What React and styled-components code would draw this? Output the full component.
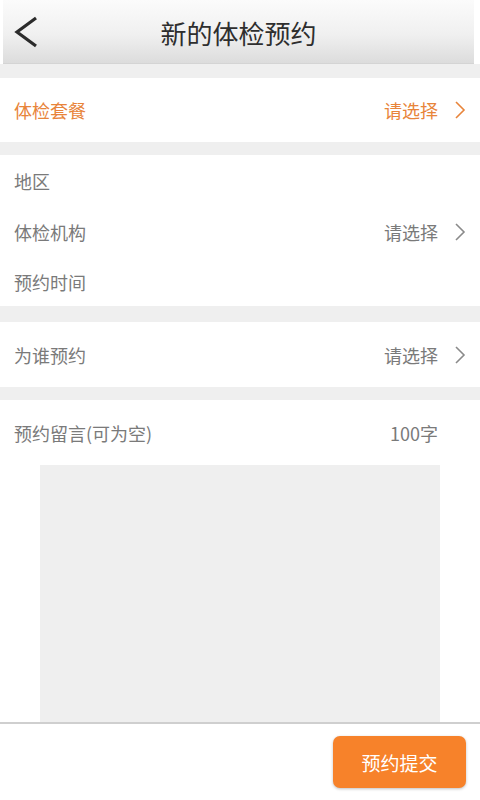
import React from "react";
import styled, { createGlobalStyle } from "styled-components";

const Global = createGlobalStyle`
  html, body { margin: 0; padding: 0; background: #ffffff; }
  body { font-family: "Noto Sans CJK SC", "Noto Sans", sans-serif; }
  * { box-sizing: border-box; }
`;

const Page = styled.div`
  width: 480px;
  height: 800px;
  display: flex;
  flex-direction: column;
  background: #ffffff;
  overflow: hidden;
`;

const HeaderWrap = styled.div`
  height: 64px;
  padding: 0 6px 0 3px;
  background: #ffffff;
  flex-shrink: 0;
`;

const Header = styled.div`
  height: 64px;
  display: grid;
  grid-template-columns: 60px 1fr 60px;
  align-items: center;
  background: linear-gradient(#fbfbfb 0%, #f0f0f0 55%, #dcdcdc 100%);
  border-bottom: 1px solid #d4d4d4;
`;

const BackBtn = styled.div`
  display: flex;
  align-items: center;
  padding-left: 10px;
  height: 100%;
`;

const Title = styled.div`
  text-align: center;
  font-size: 26px;
  color: #2e2e2e;
  padding-top: 1px;
`;

const Content = styled.div`
  flex: 1;
  background: #efefef;
  display: flex;
  flex-direction: column;
  padding-top: 14px;
  overflow: hidden;
`;

const Section = styled.div`
  background: #ffffff;
  display: flex;
  flex-direction: column;
  margin-top: ${(p) => p.mt || 0}px;
  flex: ${(p) => (p.grow ? 1 : "none")};
`;

const Row = styled.div`
  height: ${(p) => p.h || 51}px;
  display: flex;
  align-items: center;
  justify-content: space-between;
  padding: 0 14px;
  font-size: 18px;
  color: ${(p) => (p.accent ? "#e8843a" : "#7a7a7a")};
`;

const Right = styled.div`
  display: flex;
  align-items: center;
  gap: 16px;
`;

const Counter = styled.span`
  margin-right: 28px;
`;

const MessageBox = styled.div`
  flex: 1;
  margin: 0 40px;
  background: #efefef;
`;

const Footer = styled.div`
  height: 78px;
  flex-shrink: 0;
  border-top: 2px solid #cfcfcf;
  background: #ffffff;
  display: flex;
  align-items: flex-start;
  justify-content: flex-end;
  padding: 12px 14px 0 0;
`;

const SubmitBtn = styled.button`
  width: 133px;
  height: 52px;
  border: none;
  border-radius: 7px;
  background: #f7822a;
  color: #ffffff;
  font-family: "Noto Sans CJK SC", sans-serif;
  font-size: 19px;
  box-shadow: 0 1px 3px rgba(0, 0, 0, 0.25);
`;

const Chevron = ({ color }) => (
  <svg width="12" height="20" viewBox="0 0 12 20">
    <path d="M2 2 L10 10 L2 18" fill="none" stroke={color} strokeWidth="1.6" />
  </svg>
);

const BackIcon = () => (
  <svg width="26" height="32" viewBox="0 0 26 32">
    <path d="M23 2 L4 16 L23 30" fill="none" stroke="#2b2b2b" strokeWidth="3.2" />
  </svg>
);

export default function App() {
  return (
    <Page>
      <Global />
      <HeaderWrap>
        <Header>
          <BackBtn>
            <BackIcon />
          </BackBtn>
          <Title>新的体检预约</Title>
          <div />
        </Header>
      </HeaderWrap>
      <Content>
        <Section>
          <Row h={64} accent>
            <span>体检套餐</span>
            <Right>
              <span>请选择</span>
              <Chevron color="#e8843a" />
            </Right>
          </Row>
        </Section>
        <Section mt={13}>
          <Row>
            <span>地区</span>
          </Row>
          <Row>
            <span>体检机构</span>
            <Right>
              <span>请选择</span>
              <Chevron color="#8a8a8a" />
            </Right>
          </Row>
          <Row h={49}>
            <span>预约时间</span>
          </Row>
        </Section>
        <Section mt={16}>
          <Row h={65}>
            <span>为谁预约</span>
            <Right>
              <span>请选择</span>
              <Chevron color="#8a8a8a" />
            </Right>
          </Row>
        </Section>
        <Section mt={13} grow>
          <Row h={65}>
            <span>预约留言(可为空)</span>
            <Counter>100字</Counter>
          </Row>
          <MessageBox />
        </Section>
      </Content>
      <Footer>
        <SubmitBtn>预约提交</SubmitBtn>
      </Footer>
    </Page>
  );
}
